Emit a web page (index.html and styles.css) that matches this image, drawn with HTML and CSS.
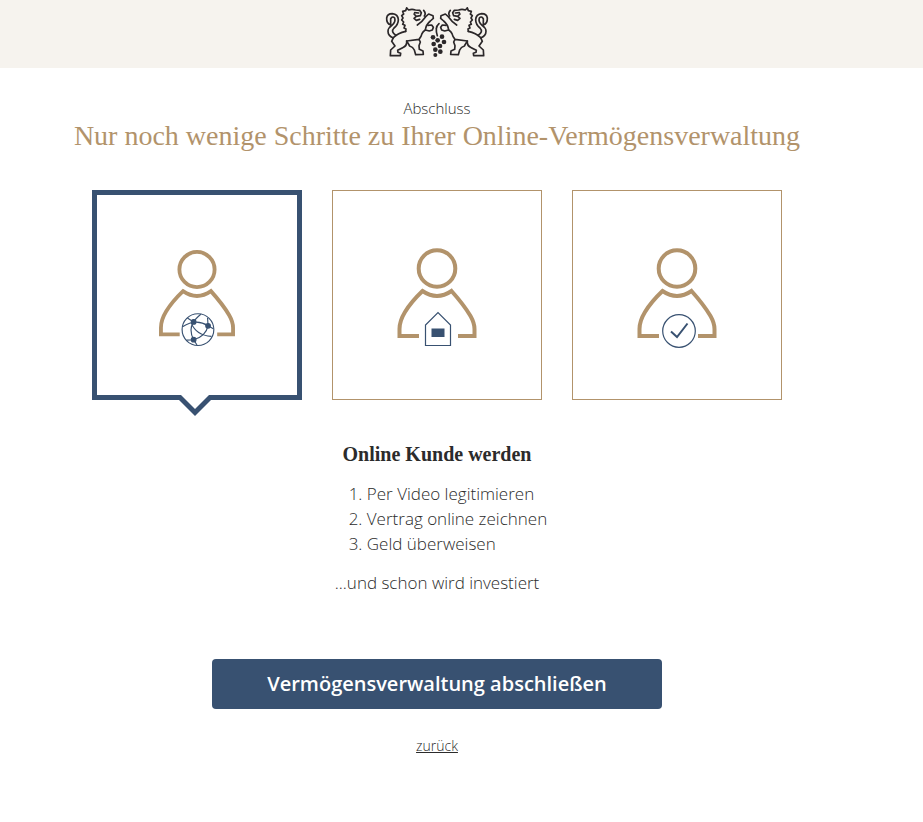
FILE: index.html
```html
<!DOCTYPE html>
<html lang="de">
<head>
  <meta charset="UTF-8" />
  <meta name="viewport" content="width=device-width, initial-scale=1" />
  <title>Abschluss - Online-Vermögensverwaltung</title>
  <link rel="stylesheet" href="styles.css">
</head>
<body>
  <header class="header">
    <svg class="logo" viewBox="27 18 312 156" role="img" aria-label="Logo">
      <defs>
        <g id="lion">
          <path d="M92 24 L98 30 Q108 26 118 30 L131 31 L136 38 L133 47 L121 49 L114 42 M116 38 L128 39 M120 50 L114 55 L121 61 L131 58 M143 31 Q151 40 145 48"/>
          <path d="M92 24 L89 32 L80 34 L83 42 L77 47 L81 54 L77 60 L83 66 L80 73 L87 76 L84 84 L90 87 L89 94"/>
          <path d="M124 75 Q138 66 149 50 L158 42 L171 47 L172 55 L163 63 Q150 74 148 90"/>
          <path d="M156 76 L167 75 L172 82 L169 90 L160 93 L148 90 Q141 94 138 101 Q136 110 129 118 L133 126 L129 137 L130 148 L141 153 L142 163 L119 164 L115 150 Q111 141 101 138 L92 123 L129 118"/>
          <path d="M92 123 Q94 137 80 143 L65 151 L66 157 L74 160 L73 167 L43 167 L44 150 L57 138 L47 124 L52 113 Q66 99 89 94"/>
          <path d="M52 114 Q36 108 36 94 Q36 84 47 77 Q60 66 56 54 Q50 47 44 56 L44 75 Q31 70 32 54 Q34 41 49 41 Q66 43 67 59 Q67 73 54 84 Q43 95 60 106"/>
        </g>
      </defs>
      <g class="lion"><use href="#lion"/></g>
      <g class="lion" transform="translate(366 0) scale(-1 1)"><use href="#lion"/></g>
      <path class="stem" d="M184 107 Q180 96 181 86 Q181 78 189 71"/>
      <g class="grapes">
        <circle cx="171" cy="112" r="7"/>
        <circle cx="198" cy="110" r="7"/>
        <circle cx="185" cy="121" r="7"/>
        <circle cx="204" cy="126" r="7"/>
        <circle cx="173" cy="132" r="7"/>
        <circle cx="192" cy="138" r="7"/>
        <circle cx="178" cy="149" r="7"/>
        <circle cx="193" cy="155" r="7"/>
        <circle cx="178" cy="165" r="6"/>
      </g>
    </svg>
  </header>

  <main class="container">
    <p class="step">Abschluss</p>
    <h1>Nur noch wenige Schritte zu Ihrer Online-Vermögensverwaltung</h1>

    <div class="cards">
      <button class="card active" type="button" aria-label="Online Kunde werden">
        <svg class="icon" viewBox="0 0 208 208">
          <g class="person" id="person">
            <circle cx="104" cy="77.500" r="18.300"/>
            <path d="M86 145 H66.500 V138 Q66.500 130 72 121 Q78 111 89.500 100 Q104 110 118.500 100 Q131 114 137.500 125 Q141.500 132 141.500 138 V145 H125"/>
          </g>
          <g class="globe">
            <circle cx="105" cy="140" r="16.500"/>
            <path d="M89 137 Q103 128 115.500 136 L121 139 M108 124 Q102 129 100.500 132 Q95 140 100.500 150.500 L104 156 M94 128 L100.500 132 M98 133 Q103 146 119 147 M115.500 136 Q113 147 100.500 150.500 L93 151 M115.500 136 L115 128"/>
            <circle class="dot" cx="100.500" cy="132" r="2.400"/>
            <circle class="dot" cx="115.500" cy="136" r="2.400"/>
            <circle class="dot" cx="100.500" cy="150.500" r="2.400"/>
          </g>
        </svg>
        <svg class="arrow" viewBox="0 0 40 21">
          <path class="arrow-fill" d="M0 0 H40 V5 H36 L20 21 L4 5 H0 Z"/>
          <path class="arrow-cut" d="M6 0 H34 L20 14 Z"/>
        </svg>
      </button>
      <button class="card" type="button" aria-label="Von zu Hause Kunde werden">
        <svg class="icon" viewBox="0 0 208 208">
          <use class="person" href="#person"/>
          <path class="house" d="M92.500 154.500 V134 L105 121.500 L117.500 134 V154.500 Z"/>
          <rect class="dot" x="98.500" y="137.500" width="13" height="8.500"/>
        </svg>
      </button>
      <button class="card" type="button" aria-label="Bereits Kunde">
        <svg class="icon" viewBox="0 0 208 208">
          <use class="person" href="#person"/>
          <circle class="badge" cx="106" cy="140" r="16.300"/>
          <path class="check" d="M98 140.500 L104 146 L114.500 132.500"/>
        </svg>
      </button>
    </div>

    <section class="info">
      <h2>Online Kunde werden</h2>
      <ol>
        <li>Per Video legitimieren</li>
        <li>Vertrag online zeichnen</li>
        <li>Geld überweisen</li>
      </ol>
      <p>...und schon wird investiert</p>
    </section>

    <button class="submit-btn" type="button">Vermögensverwaltung abschließen</button>
    <a class="back-link" href="#">zurück</a>
  </main>
</body>
</html>
```

FILE: styles.css
```css
* {
  box-sizing: border-box;
}
body {
  margin: 0;
  font-family: "Open Sans", sans-serif;
  font-weight: 300;
  font-size: 17px;
  line-height: 25px;
  color: #2b2b2b;
  background: #fff;
}
.header {
  display: flex;
  justify-content: center;
  height: 68px;
  padding: 6px 49px 0 0;
  background: #f6f3ee;
}
.logo {
  width: 104px;
  height: 52px;
}
.lion,
.stem {
  fill: none;
  stroke: #2b2729;
  stroke-width: 5;
  stroke-linejoin: round;
  stroke-linecap: round;
}
.grapes {
  fill: #2b2729;
}
.container {
  display: flex;
  flex-direction: column;
  align-items: center;
  padding: 29px 49px 40px 0;
  text-align: center;
}
.step {
  margin: 0;
  font-size: 15px;
  line-height: 22px;
}
h1,
h2 {
  font-family: "Liberation Serif", serif;
}
h1 {
  margin: 0;
  font-size: 28px;
  font-weight: normal;
  line-height: 34px;
  color: #b2936b;
}
.cards {
  display: flex;
  gap: 30px;
  margin-top: 37px;
}
.card {
  position: relative;
  width: 210px;
  height: 210px;
  padding: 0;
  border: 1px solid #b2936b;
  background: #fff;
  cursor: pointer;
}
.card.active {
  border: 5px solid #385171;
}
.icon {
  display: block;
  width: 100%;
}
.person {
  fill: none;
  stroke: #b2936b;
  stroke-width: 4;
}
.globe,
.house,
.badge {
  fill: none;
  stroke: #385171;
  stroke-width: 1.2;
}
.check {
  fill: none;
  stroke: #385171;
  stroke-width: 2;
}
.dot {
  fill: #385171;
}
.arrow {
  position: absolute;
  left: 78px;
  bottom: -21px;
  width: 40px;
  height: 21px;
}
.arrow-fill {
  fill: #385171;
}
.arrow-cut {
  fill: #fff;
}
.info {
  margin-top: 40px;
}
h2 {
  margin: 0;
  font-size: 20px;
  line-height: 28px;
}
.info ol {
  display: inline-block;
  margin: 13px 0 14px;
  padding-left: 40px;
  text-align: left;
}
.info p {
  margin: 0;
}
.submit-btn {
  width: 450px;
  max-width: 100%;
  height: 50px;
  margin-top: 64px;
  padding: 0 0 2px;
  border: none;
  border-radius: 4px;
  background: #385171;
  color: #fff;
  font-family: inherit;
  font-size: 20px;
  font-weight: 600;
  cursor: pointer;
}
.back-link {
  margin-top: 25px;
  font-size: 14px;
  line-height: 24px;
  color: #2b2b2b;
}
```
